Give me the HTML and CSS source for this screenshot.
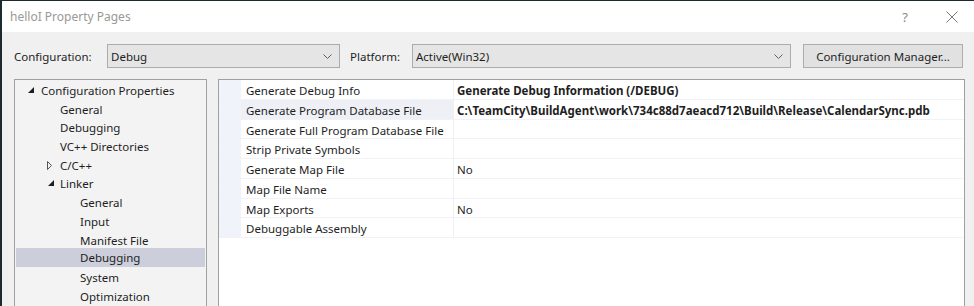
FILE: index.html
```html
<!DOCTYPE html>
<html lang="en">
<head>
    <meta charset="UTF-8">
    <title>helloI Property Pages</title>
    <link rel="stylesheet" href="styles.css">
</head>
<body>
    <div class="window">
        <!-- title bar -->
        <div class="titlebar">
            <span class="title">helloI Property Pages</span>
            <span class="help">?</span>
            <svg class="close" width="12" height="12" viewBox="0 0 12 12">
                <path d="M0.5 0.5 L11.5 11.5 M11.5 0.5 L0.5 11.5" stroke="#7a7a7a" stroke-width="1" fill="none"/>
            </svg>
        </div>

        <!-- configuration / platform row -->
        <div class="toolbar">
            <label class="lbl lbl-config">Configuration:</label>
            <div class="combo combo-config">
                <span>Debug</span>
                <svg class="chev" width="9" height="5" viewBox="0 0 9 5"><path d="M0.5 0.5 L4.5 4.5 L8.5 0.5" stroke="#606060" fill="none"/></svg>
            </div>
            <label class="lbl lbl-platform">Platform:</label>
            <div class="combo combo-platform">
                <span>Active(Win32)</span>
                <svg class="chev" width="9" height="5" viewBox="0 0 9 5"><path d="M0.5 0.5 L4.5 4.5 L8.5 0.5" stroke="#606060" fill="none"/></svg>
            </div>
            <button class="btn">Configuration Manager...</button>
        </div>

        <div class="panes">
            <!-- left tree -->
            <div class="tree">
                <div class="node lvl0">
                    <svg class="exp" width="6" height="6" viewBox="0 0 6 6"><path d="M6 0 L6 6 L0 6 Z" fill="#1e1e1e"/></svg>
                    Configuration Properties
                </div>
                <div class="node lvl1">General</div>
                <div class="node lvl1">Debugging</div>
                <div class="node lvl1">VC++ Directories</div>
                <div class="node lvl1">
                    <svg class="col" width="5" height="9" viewBox="0 0 5 9"><path d="M0.5 0.5 L4.5 4.5 L0.5 8.5 Z" fill="none" stroke="#555"/></svg>
                    C/C++
                </div>
                <div class="node lvl1">
                    <svg class="exp exp1" width="6" height="6" viewBox="0 0 6 6"><path d="M6 0 L6 6 L0 6 Z" fill="#1e1e1e"/></svg>
                    Linker
                </div>
                <div class="node lvl2">General</div>
                <div class="node lvl2">Input</div>
                <div class="node lvl2">Manifest File</div>
                <div class="node lvl2 selected">Debugging</div>
                <div class="node lvl2">System</div>
                <div class="node lvl2">Optimization</div>
            </div>

            <!-- property grid -->
            <div class="grid">
                <div class="row">
                    <div class="margin"></div>
                    <div class="name">Generate Debug Info</div>
                    <div class="value bold">Generate Debug Information (/DEBUG)</div>
                </div>
                <div class="row">
                    <div class="margin"></div>
                    <div class="name current">Generate Program Database File</div>
                    <div class="value bold">C:\TeamCity\BuildAgent\work\734c88d7aeacd712\Build\Release\CalendarSync.pdb</div>
                </div>
                <div class="row">
                    <div class="margin"></div>
                    <div class="name">Generate Full Program Database File</div>
                    <div class="value"></div>
                </div>
                <div class="row">
                    <div class="margin"></div>
                    <div class="name">Strip Private Symbols</div>
                    <div class="value"></div>
                </div>
                <div class="row">
                    <div class="margin"></div>
                    <div class="name">Generate Map File</div>
                    <div class="value">No</div>
                </div>
                <div class="row">
                    <div class="margin"></div>
                    <div class="name">Map File Name</div>
                    <div class="value"></div>
                </div>
                <div class="row">
                    <div class="margin"></div>
                    <div class="name">Map Exports</div>
                    <div class="value">No</div>
                </div>
                <div class="row">
                    <div class="margin"></div>
                    <div class="name">Debuggable Assembly</div>
                    <div class="value"></div>
                </div>
            </div>
        </div>
    </div>
</body>
</html>
```

FILE: styles.css
```css
html, body {
    margin: 0;
    padding: 0;
    height: 100%;
    overflow: hidden;
}
body {
    background-color: #1d2b31;
    font-family: "Noto Sans", "Open Sans", sans-serif;
    font-size: 11.5px;
    color: #1e1e1e;
}
.window {
    margin: 1px 0 0 2px;
    background-color: #f0f0f0;
    height: 320px;
}
.titlebar {
    height: 31px;
    background-color: #ffffff;
    display: flex;
    align-items: center;
}
.title {
    padding-left: 8px;
    color: #999999;
    flex: 1;
    font-size: 12px;
}
.help {
    color: #888888;
    font-size: 13px;
    margin-right: 38px;
}
.close {
    margin-right: 16px;
}
.toolbar {
    display: flex;
    align-items: center;
    padding: 12px 0 0 12px;
    height: 24px;
}
.lbl {
    color: #1e1e1e;
    padding-top: 1px;
}
.lbl-config {
    width: 93px;
}
.lbl-platform {
    margin-left: 10px;
    width: 62px;
}
.combo {
    box-sizing: border-box;
    height: 24px;
    background-color: #e5e5e5;
    border: 1px solid #acacac;
    display: flex;
    align-items: center;
    justify-content: space-between;
    padding: 1px 7px 0 3px;
}
.combo-config {
    width: 233px;
}
.combo-platform {
    width: 379px;
}
.btn {
    box-sizing: border-box;
    margin-left: 12px;
    width: 160px;
    height: 24px;
    background-color: #e1e1e1;
    border: 1px solid #adadad;
    font-family: inherit;
    font-size: 11.5px;
    color: #1e1e1e;
    padding: 1px 0 0;
}
.panes {
    display: flex;
    gap: 11px;
    padding: 11px 9px 0 12px;
}
.tree {
    box-sizing: border-box;
    width: 193px;
    height: 240px;
    border: 1px solid #a0a0a0;
    background-color: #f3f3f3;
    padding: 0 1px;
}
.node {
    height: 18.7px;
    line-height: 21px;
    white-space: nowrap;
    position: relative;
}
.lvl0 {
    padding-left: 25px;
}
.lvl1 {
    padding-left: 44px;
}
.lvl2 {
    padding-left: 64px;
}
.selected {
    background-color: #cccedb;
    line-height: 20px;
}
.exp {
    position: absolute;
    left: 12px;
    top: 7px;
}
.exp1 {
    left: 32px;
}
.col {
    position: absolute;
    left: 31px;
    top: 6px;
}
.grid {
    box-sizing: border-box;
    flex: 1;
    height: 240px;
    border: 1px solid #a0a0a0;
    background-color: #ffffff;
}
.row {
    display: flex;
    height: 19.75px;
    line-height: 21px;
    border-bottom: 1px solid #f0f2f7;
    box-sizing: border-box;
}
.margin {
    width: 22px;
    background-color: #f0f3f9;
}
.name {
    width: 207px;
    padding-left: 5px;
    border-right: 1px solid #eef0f5;
    white-space: nowrap;
    overflow: hidden;
}
.name.current {
    background-color: #eef0f5;
}
.value {
    flex: 1;
    padding-left: 3px;
    white-space: nowrap;
}
.bold {
    font-weight: bold;
}
```
